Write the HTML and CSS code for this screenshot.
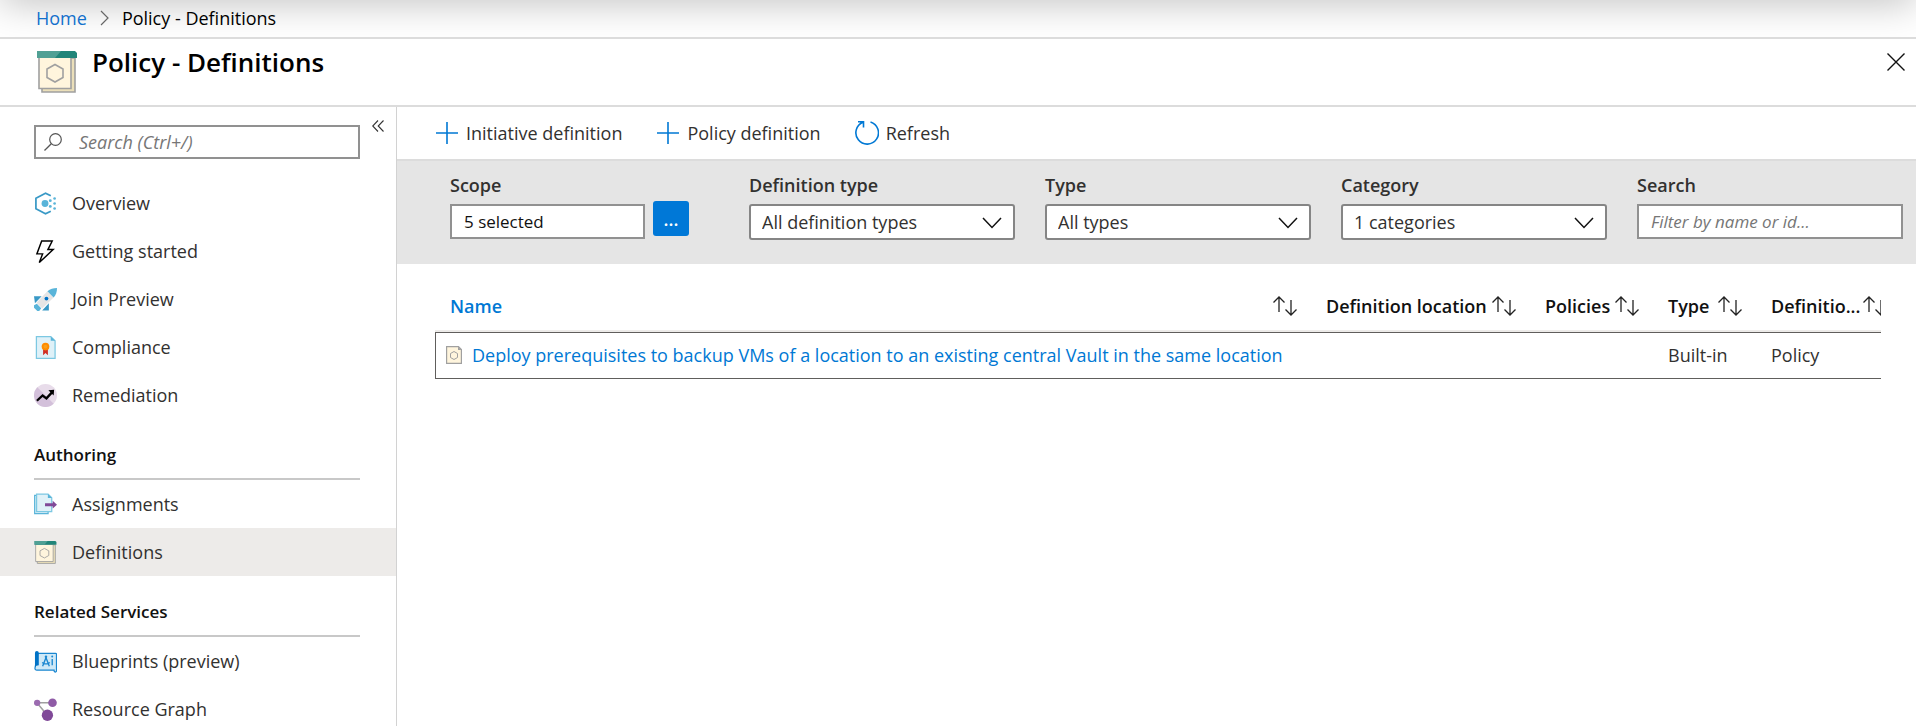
FILE: index.html
```html
<!DOCTYPE html>
<html lang="en">
<head>
<meta charset="utf-8">
<meta name="viewport" content="width=device-width, initial-scale=1">
<title>Policy - Definitions</title>
<link rel="stylesheet" href="styles.css">
</head>
<body>
<svg class="sprite" aria-hidden="true">
  <symbol id="sort" viewBox="0 0 24 20">
    <path d="M6 16V1.500M0.500 6.500L6 1l5.500 5.500M18 4v14.500M12.500 13.500L18 19l5.500-5.500" fill="none" stroke="currentColor" stroke-width="1.300"/>
  </symbol>
  <symbol id="chevron" viewBox="0 0 20 12">
    <path d="M1 1l9 9.500L19 1" fill="none" stroke="currentColor" stroke-width="1.500"/>
  </symbol>
  <symbol id="plus" viewBox="0 0 24 24">
    <path d="M12 1v22M1 12h22" fill="none" stroke="currentColor" stroke-width="1.600"/>
  </symbol>
  <symbol id="definitions" viewBox="0 0 40 42">
    <path d="M5 7h33v34H5z" fill="#ebdfb9" stroke="#a0a0a0" stroke-width="1.600"/>
    <path d="M2 6h32v31.500H2z" fill="#fff5dd" stroke="#a0a0a0" stroke-width="1.600"/>
    <path d="M0 0h38l2 2v5H0z" fill="#218579"/>
    <path d="M0 0h24l-6 7H0z" fill="#50a094"/>
    <path d="M18 13.500l8 4.500v8.500L18 31l-8-4.500V18z" fill="none" stroke="#a0a0a0" stroke-width="1.600"/>
  </symbol>
</svg>
<header class="crumbs">
  <nav class="crumbs-list" aria-label="Breadcrumb">
    <a href="#">Home</a>
    <svg class="crumb-sep" viewBox="0 0 9 16"><path d="M1 1l7 7-7 7" fill="none" stroke="#666" stroke-width="1.200"/></svg>
    <span>Policy - Definitions</span>
  </nav>
</header>
<div class="titlebar">
  <svg class="title-icon"><use href="#definitions"/></svg>
  <h1>Policy - Definitions</h1>
  <button class="close" type="button" aria-label="Close">
    <svg viewBox="0 0 18 18"><path d="M.500.500l17 17M17.500.500l-17 17" stroke="#111" stroke-width="1.400"/></svg>
  </button>
</div>
<div class="body">
  <aside class="menu">
    <div class="menu-top">
      <label class="menu-search">
        <svg viewBox="0 0 18 18"><circle cx="11.500" cy="6.500" r="5.800" fill="none" stroke="#555" stroke-width="1.200"/><path d="M7.300 10.700L.500 17.500" stroke="#555" stroke-width="1.300"/></svg>
        <input type="text" placeholder="Search (Ctrl+/)" aria-label="Search menu">
      </label>
      <button class="collapse" type="button" aria-label="Collapse menu">
        <svg viewBox="0 0 12 12"><path d="M6 .500L.700 6 6 11.500M11.500.500L6.200 6l5.300 5.500" fill="none" stroke="#333" stroke-width="1.100"/></svg>
      </button>
    </div>
    <nav aria-label="Policy">
      <ul class="items">
        <li><a href="#"><svg viewBox="0 0 24 24"><path d="M17.500 4L12 1.200 2 6.500v11l10 5.300 5.500-2.800" fill="none" stroke="#3999c6" stroke-width="1.800"/><circle cx="11.500" cy="12" r="3.600" fill="#59b4d9"/><g fill="#59b4d9"><circle cx="17" cy="9" r="1.500"/><circle cx="17" cy="15" r="1.500"/><circle cx="21.500" cy="6.800" r="1.400"/><circle cx="21.500" cy="12" r="1.400"/><circle cx="21.500" cy="17.200" r="1.400"/></g></svg>Overview</a></li>
        <li><a href="#"><svg viewBox="0 0 24 24"><path d="M8 1h11l-4.500 9H20L5.500 23.500l3.500-9H3z" fill="none" stroke="#000" stroke-width="1.500"/></svg>Getting started</a></li>
        <li><a href="#"><svg viewBox="0 0 24 24"><path d="M0 8.500h8L1 16zM15.500 16v7.500H8.500z" fill="#3999c6"/><path d="M3 16.500l4.500 4.500L5.500 24H3.500L0 20.500V18z" fill="#59b4d9"/><path d="M14 3.500l6.500 6.500L8.500 21.500 2.500 15.500z" fill="#e5e5e5"/><path d="M24 0c0 4-1 7.500-3.500 10L14 3.500C17 1 20 0 24 0z" fill="#59b4d9"/><circle cx="13" cy="11" r="2" fill="#0072c6"/></svg>Join Preview</a></li>
        <li><a href="#"><svg viewBox="0 0 24 24"><path d="M2.500.700h15L22 5v18.300H2.500z" fill="#dff1f8" stroke="#7cc8e2" stroke-width="1.300"/><path d="M17.500.500L22 5h-4.500z" fill="#59b4d9"/><path d="M9.500 12h5v8L12 17.800 9.500 20z" fill="#d02e25"/><circle cx="12" cy="11" r="4" fill="#ff8c00"/><circle cx="12" cy="11" r="2" fill="#f9a01b"/></svg>Compliance</a></li>
        <li><a href="#"><svg viewBox="0 0 24 24"><circle cx="12" cy="12" r="12" fill="#e8dcea"/><path d="M3.500 3.500a12 12 0 0 0 17 17z" fill="#d3c0da"/><path d="M3 17.500l6-5.500 4 3 5.500-6" fill="none" stroke="#000" stroke-width="2.400"/><path d="M15 6.500l6-.500-.500 6z"/></svg>Remediation</a></li>
      </ul>
      <h2>Authoring</h2>
      <ul class="items">
        <li><a href="#"><svg viewBox="0 0 24 24"><path d="M.700 2.500h14v19H.700z" fill="#dff1f8" stroke="#59b4d9" stroke-width="1.300"/><path d="M2.700 1.200h12l3.800 3.800v14.500H2.700z" fill="#dff1f8" stroke="#7cc8e2" stroke-width="1.300"/><path d="M14.500 1v4.200h4.200z" fill="#59b4d9"/><path d="M11.500 10.700h8V8.200L24 12.200l-4.500 4v-2.500h-8z" fill="#804998"/></svg>Assignments</a></li>
        <li class="selected"><a href="#" aria-current="page"><svg><use href="#definitions"/></svg>Definitions</a></li>
      </ul>
      <h2>Related Services</h2>
      <ul class="items">
        <li><a href="#"><svg viewBox="0 0 24 24"><path d="M4 3.500h18.500q1 0 1 1V22q-1 2-2.500 0v-1H3q-2 0-2-2z" fill="#cfe9f7" stroke="#1a86d0" stroke-width="1.300"/><path d="M1 3q0-2 2-2t2 2v13q-3 0-4 2z" fill="#0072c6"/><path d="M9 17l3.500-9L16 17M8.500 13q4 3 8 0M19 9.500V16" fill="none" stroke="#1a86d0" stroke-width="1.400"/><circle cx="12.500" cy="7" r="1.300" fill="#1a86d0"/><circle cx="19" cy="6.800" r="1" fill="#1a86d0"/></svg>Blueprints (preview)</a></li>
        <li><a href="#"><svg viewBox="0 0 24 24"><path d="M3 5h16M3 5l11 13" stroke="#a0a0a0" stroke-width="1.600"/><circle cx="3.300" cy="5" r="3.300" fill="#9b6bb0"/><circle cx="19.300" cy="5" r="4.500" fill="#8f5ba6"/><circle cx="14" cy="18" r="5.900" fill="#804998"/></svg>Resource Graph</a></li>
      </ul>
    </nav>
  </aside>
  <main>
    <div class="toolbar">
      <button type="button"><svg><use href="#plus"/></svg>Initiative definition</button>
      <button type="button"><svg><use href="#plus"/></svg>Policy definition</button>
      <button type="button"><svg viewBox="0 0 24 24"><path d="M15.500 1A11.300 11.300 0 1 1 8 1.300M3 .800h5.500v5.700" fill="none" stroke="currentColor" stroke-width="1.600"/></svg>Refresh</button>
    </div>
    <form class="filters">
      <div class="field">
        <label for="scope">Scope</label>
        <div class="scope">
          <input id="scope" type="text" value="5 selected">
          <button type="button" aria-label="Select scope">...</button>
        </div>
      </div>
      <div class="field">
        <label for="deftype">Definition type</label>
        <div class="select"><select id="deftype"><option>All definition types</option></select><svg><use href="#chevron"/></svg></div>
      </div>
      <div class="field">
        <label for="type">Type</label>
        <div class="select"><select id="type"><option>All types</option></select><svg><use href="#chevron"/></svg></div>
      </div>
      <div class="field">
        <label for="category">Category</label>
        <div class="select"><select id="category"><option>1 categories</option></select><svg><use href="#chevron"/></svg></div>
      </div>
      <div class="field">
        <label for="search">Search</label>
        <input id="search" type="text" placeholder="Filter by name or id...">
      </div>
    </form>
    <div class="grid">
      <table>
        <colgroup><col><col class="c-location"><col class="c-policies"><col class="c-type"><col class="c-deftype"></colgroup>
        <thead>
          <tr>
            <th scope="col" class="sorted"><div>Name<svg><use href="#sort"/></svg></div></th>
            <th scope="col"><div>Definition location<svg><use href="#sort"/></svg></div></th>
            <th scope="col"><div>Policies<svg><use href="#sort"/></svg></div></th>
            <th scope="col"><div>Type<svg><use href="#sort"/></svg></div></th>
            <th scope="col"><div>Definitio...<svg><use href="#sort"/></svg></div></th>
          </tr>
        </thead>
        <tbody>
          <tr>
            <td class="name"><div><svg viewBox="0 0 16 18"><path d="M.600.600h11.900l2.900 2.900v13.900H.600z" fill="#fff5dd" stroke="#a0a0a0" stroke-width="1.200"/><path d="M12 .600V4h3.400z" fill="#a0a0a0"/><path d="M8 5.500l3.500 2v4L8 13.500l-3.500-2v-4z" fill="none" stroke="#a0a0a0"/></svg><a href="#">Deploy prerequisites to backup VMs of a location to an existing central Vault in the same location</a></div></td>
            <td></td>
            <td></td>
            <td>Built-in</td>
            <td>Policy</td>
          </tr>
        </tbody>
      </table>
    </div>
  </main>
</div>
</body>
</html>
```

FILE: styles.css
```css
* { box-sizing: border-box; }

html, body { height: 100%; }

body {
  margin: 0;
  display: flex;
  flex-direction: column;
  overflow: hidden;
  background: #fff;
  color: #323130;
  font: 18px/24px "Open Sans", "Noto Sans", sans-serif;
}

a { color: #0078d4; text-decoration: none; }

button, input, select { font: inherit; color: inherit; }

button { border: 0; padding: 0; background: none; cursor: pointer; }

.sprite { position: absolute; width: 0; height: 0; }

/* Breadcrumb */
.crumbs {
  position: relative;
  flex: none;
  overflow: hidden;
  padding: 6px 36px 7px;
  border-bottom: 2px solid #dcdcdc;
  color: #000;
}

.crumbs::before {
  content: "";
  position: absolute;
  top: -40px;
  left: 0;
  right: 0;
  height: 40px;
  box-shadow: 0 3px 38px rgba(0, 0, 0, 0.25);
}

.crumbs-list { position: relative; display: flex; align-items: center; gap: 13px; }
.crumbs-list a { color: #1270cc; }
.crumb-sep { width: 9px; height: 16px; }

/* Title */
.titlebar {
  flex: none;
  display: flex;
  align-items: flex-start;
  padding: 8px 11px 12px 37px;
  border-bottom: 2px solid #dcdcdc;
}

.title-icon { width: 40px; height: 42px; margin-top: 4px; }

h1 {
  flex: 1;
  margin: 0 0 0 15px;
  color: #000;
  font-size: 26px;
  font-weight: 600;
  line-height: 30px;
}

.close { display: flex; padding-top: 6px; }
.close svg { width: 18px; height: 18px; }

.body { flex: 1; min-height: 0; display: flex; }

/* Resource menu */
.menu {
  flex: none;
  width: 397px;
  overflow: hidden;
  border-right: 1px solid #d2d2d2;
}

.menu-top {
  display: flex;
  align-items: flex-start;
  gap: 12px;
  padding: 13px 12px 20px 34px;
}

.menu-search {
  flex: 1;
  display: flex;
  align-items: center;
  gap: 17px;
  height: 34px;
  margin-top: 5px;
  padding: 0 8px;
  border: 2px solid #919191;
}

.menu-search svg { width: 18px; height: 18px; }
.menu-search input { flex: 1; min-width: 0; border: 0; padding: 0; outline: 0; background: none; }

input::placeholder { color: #767676; font-style: italic; opacity: 1; }
#search, #scope { font-size: 17px; }

.collapse { display: flex; }
.collapse svg { width: 12px; height: 12px; }

.items { margin: 0; padding: 0; list-style: none; }

.items a {
  display: flex;
  align-items: center;
  gap: 15px;
  height: 48px;
  padding: 0 34px;
  color: inherit;
}

.items svg { width: 23px; height: 23px; }
.selected { background: #edebe9; }

h2 {
  height: 61px;
  margin: 0 36px 0 34px;
  padding-top: 24px;
  border-bottom: 2px solid #c8c8c8;
  color: #111;
  font-size: 17px;
  font-weight: 600;
  line-height: 24px;
}

/* Content */
main { flex: 1; min-width: 0; }

.toolbar {
  display: flex;
  gap: 34px;
  height: 54px;
  padding: 0 38px;
  border-bottom: 2px solid #dcdcdc;
}

.toolbar button { display: flex; align-items: center; gap: 7px; }
.toolbar svg { width: 24px; height: 24px; color: #0078d4; }

.filters {
  display: grid;
  grid-template-columns: 269px repeat(4, 1fr);
  gap: 30px;
  padding: 12px 13px 24px 53px;
  background: #e5e5e5;
}

.field { display: flex; flex-direction: column; gap: 7px; min-width: 0; }
.field label { font-weight: 600; }

.field input {
  width: 100%;
  height: 35px;
  padding: 0 12px;
  border: 2px solid #919191;
  background: #fff;
}

#scope { width: 195px; color: #111; }

.scope { display: flex; gap: 8px; }

.scope button {
  width: 36px;
  height: 35px;
  margin-top: -3px;
  border-radius: 3px;
  background: #0078d7;
  color: #fff;
  font-weight: 600;
}

.select { position: relative; }

.select select {
  width: 100%;
  height: 36px;
  padding: 0 40px 0 11px;
  border: 2px solid #858585;
  border-radius: 3px;
  appearance: none;
  background: #fff;
}

.select svg {
  position: absolute;
  top: 13px;
  right: 13px;
  width: 20px;
  height: 12px;
  color: #111;
  pointer-events: none;
}

/* Definitions list */
.grid { margin: 20px 35px 0 38px; overflow: hidden; }

table {
  width: calc(100% + 20px);
  table-layout: fixed;
  border-collapse: separate;
  border-spacing: 0;
}

.c-location { width: 219px; }
.c-policies { width: 123px; }
.c-type { width: 103px; }
.c-deftype { width: 145px; }

th, td { padding: 0 14px 2px 15px; text-align: left; white-space: nowrap; }

th {
  height: 48px;
  border-bottom: 2px solid #edebe9;
  color: #111;
  font-weight: 600;
}

th div { display: flex; align-items: center; justify-content: space-between; }
th svg { flex: none; width: 24px; height: 20px; color: #222; }
.sorted { color: #0078d4; }

td { height: 47px; border: solid #605e5c; border-width: 1px 0; }
td.name { padding-left: 10px; border-left-width: 1px; }
.name div { display: flex; align-items: center; gap: 10px; }
.name svg { flex: none; width: 16px; height: 18px; }
```
